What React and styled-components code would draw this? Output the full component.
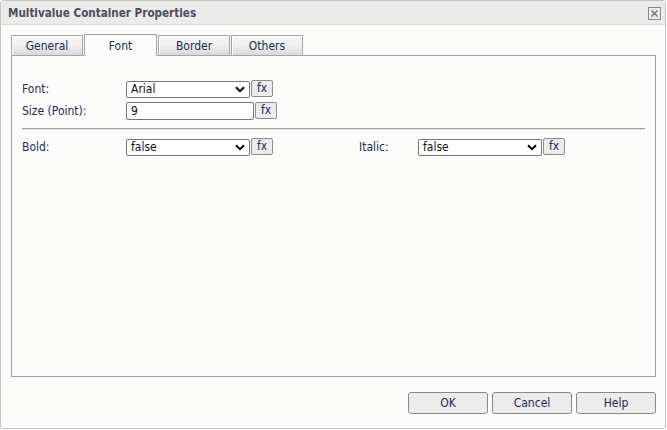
import React from 'react';
import styled, { createGlobalStyle } from 'styled-components';

const GlobalStyle = createGlobalStyle`
    html, body {
        margin: 0;
        padding: 0;
        background: #ffffff;
    }
    body {
        font-family: "DejaVu Sans Condensed", "DejaVu Sans", sans-serif;
        font-size: 12px;
    }
`;

const Dialog = styled.div`
    box-sizing: border-box;
    width: 666px;
    height: 429px;
    border: 1px solid #c4c4c4;
    border-radius: 3px;
    background: #fcfdfb;
    display: flex;
    flex-direction: column;
`;

const TitleBar = styled.div`
    box-sizing: border-box;
    height: 24px;
    flex: none;
    display: flex;
    align-items: center;
    justify-content: space-between;
    padding: 0 4px 0 7px;
    background: #ebecea;
    border-bottom: 1px solid #d9dad8;
`;

const Title = styled.span`
    font-weight: bold;
    font-size: 11.6px;
    color: #4d4d5c;
`;

const CloseButton = styled.span`
    display: flex;
    width: 13px;
    height: 13px;
    margin-top: 1px;
`;

const Body = styled.div`
    flex: 1;
    display: flex;
    flex-direction: column;
    padding: 9px 9px 0 10px;
`;

const TabRow = styled.div`
    display: flex;
    align-items: flex-end;
    gap: 1px;
    height: 22px;
    margin-bottom: -1px;
    position: relative;
    z-index: 1;
`;

const Tab = styled.div`
    box-sizing: border-box;
    width: ${({ $w }) => $w}px;
    height: ${({ $active }) => ($active ? 22 : 21)}px;
    display: flex;
    align-items: center;
    justify-content: center;
    padding-top: 1px;
    color: #1e2c4c;
    border: 1px solid #a3a3a3;
    border-bottom: ${({ $active }) => ($active ? '1px solid #fcfdfb' : '1px solid #a3a3a3')};
    background: ${({ $active }) =>
        $active ? '#fcfdfb' : 'linear-gradient(#f4f4f4, #f0f0f0 50%, #d8d8d8)'};
    box-shadow: ${({ $active }) => ($active ? 'none' : 'inset 1px 1px 0 #ffffff')};
`;

const Panel = styled.div`
    box-sizing: border-box;
    width: 645px;
    height: 322px;
    border: 1px solid #a0a0a0;
    padding: 24px 10px 0 10px;
    display: flex;
    flex-direction: column;
`;

const Row = styled.div`
    display: flex;
    align-items: center;
    height: 18px;
    margin-bottom: ${({ $mb }) => $mb || 0}px;
`;

const Field = styled.div`
    display: flex;
    align-items: center;
    width: ${({ $w }) => ($w ? `${$w}px` : 'auto')};
`;

const Label = styled.span`
    width: ${({ $w }) => $w}px;
    flex: none;
    color: #1e2c4c;
`;

const SelectBox = styled.div`
    box-sizing: border-box;
    width: ${({ $w }) => $w}px;
    height: 17px;
    border: 1px solid #767676;
    border-radius: 2px;
    background: #ffffff;
    display: flex;
    align-items: center;
    justify-content: space-between;
    padding: 0 4px 0 4px;
    color: #111;
`;

const TextInput = styled.div`
    box-sizing: border-box;
    width: ${({ $w }) => $w}px;
    height: 18px;
    border: 1px solid #767676;
    border-radius: 2px;
    background: #ffffff;
    display: flex;
    align-items: center;
    padding: 0 4px;
    color: #111;
`;

const FxButton = styled.div`
    box-sizing: border-box;
    width: 22px;
    height: 17px;
    margin-top: -2px;
    margin-left: 1px;
    border: 1px solid #8d8d8d;
    border-radius: 2px;
    background: #ececec;
    display: flex;
    align-items: center;
    justify-content: center;
    color: #1e2c4c;
    padding-bottom: 1px;
`;

const Separator = styled.div`
    height: 1px;
    background: #a0a0a0;
    border-bottom: 1px solid #e4e4e4;
    margin: 0 0 8px 0;
`;

const Footer = styled.div`
    display: flex;
    justify-content: flex-end;
    gap: 4px;
    padding: 15px 0 0 0;
`;

const Button = styled.div`
    box-sizing: border-box;
    width: 80px;
    height: 22px;
    border: 1px solid #8a8a8a;
    border-radius: 3px;
    background: #ececec;
    display: flex;
    align-items: center;
    justify-content: center;
    color: #1e2c4c;
`;

const Chevron = () => (
    <svg width="10" height="7" viewBox="0 0 10 7">
        <path d="M1 1.2 L5 5.2 L9 1.2" fill="none" stroke="#000" strokeWidth="2" />
    </svg>
);

const CloseIcon = () => (
    <svg width="13" height="13" viewBox="0 0 13 13">
        <rect x="0.5" y="0.5" width="12" height="12" fill="none" stroke="#8a8a8a" />
        <path d="M3.5 3.5 L9.5 9.5 M9.5 3.5 L3.5 9.5" stroke="#707070" strokeWidth="1.4" />
    </svg>
);

const tabs = [
    { name: 'General', w: 72 },
    { name: 'Font', w: 73, active: true },
    { name: 'Border', w: 72 },
    { name: 'Others', w: 72 },
];

const App = () => (
    <>
        <GlobalStyle />
        <Dialog>
            <TitleBar>
                <Title>Multivalue Container Properties</Title>
                <CloseButton>
                    <CloseIcon />
                </CloseButton>
            </TitleBar>
            <Body>
                <TabRow>
                    {tabs.map(t => (
                        <Tab key={t.name} $w={t.w} $active={t.active}>
                            {t.name}
                        </Tab>
                    ))}
                </TabRow>
                <Panel>
                    <Row $mb={4}>
                        <Field>
                            <Label $w={104}>Font:</Label>
                            <SelectBox $w={124}>
                                <span>Arial</span>
                                <Chevron />
                            </SelectBox>
                            <FxButton>fx</FxButton>
                        </Field>
                    </Row>
                    <Row $mb={8}>
                        <Field>
                            <Label $w={104}>Size (Point):</Label>
                            <TextInput $w={128}>9</TextInput>
                            <FxButton>fx</FxButton>
                        </Field>
                    </Row>
                    <Separator />
                    <Row>
                        <Field $w={337}>
                            <Label $w={104}>Bold:</Label>
                            <SelectBox $w={124}>
                                <span>false</span>
                                <Chevron />
                            </SelectBox>
                            <FxButton>fx</FxButton>
                        </Field>
                        <Field>
                            <Label $w={59}>Italic:</Label>
                            <SelectBox $w={124}>
                                <span>false</span>
                                <Chevron />
                            </SelectBox>
                            <FxButton>fx</FxButton>
                        </Field>
                    </Row>
                </Panel>
                <Footer>
                    <Button>OK</Button>
                    <Button>Cancel</Button>
                    <Button>Help</Button>
                </Footer>
            </Body>
        </Dialog>
    </>
);

export default App;
